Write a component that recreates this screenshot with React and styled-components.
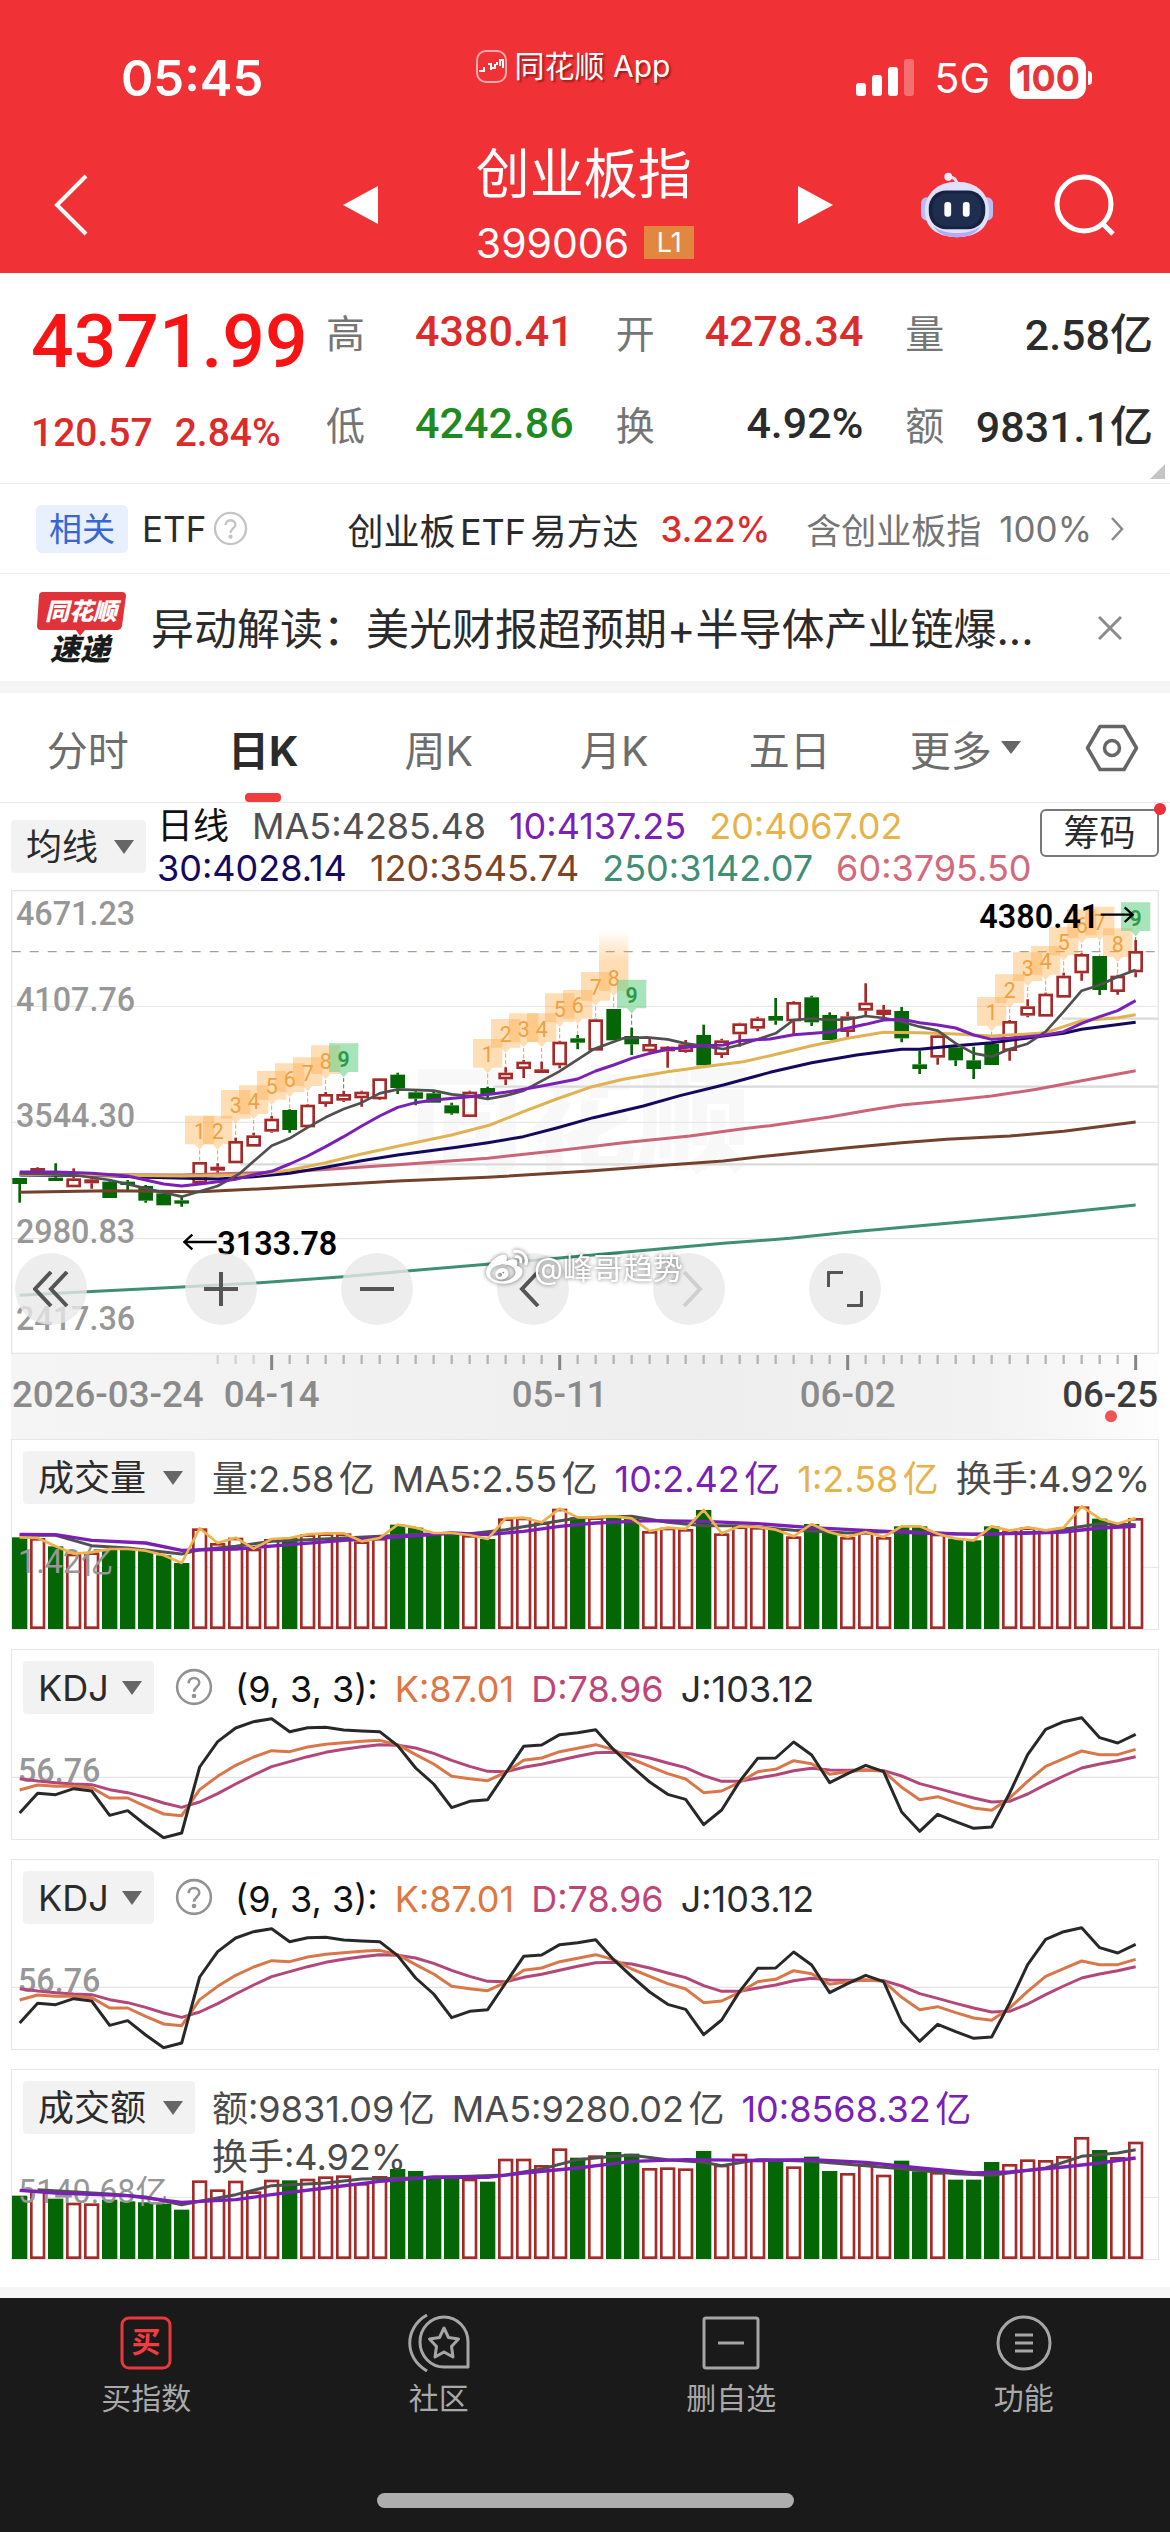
import React, { useState } from 'react'
import styled, { createGlobalStyle } from 'styled-components'
import { FaWeibo } from 'react-icons/fa'

const UI_FONT = 'Inter, "Noto Sans CJK SC", sans-serif'
const NUM_FONT = 'Roboto, "Noto Sans CJK SC", sans-serif'

const RED = '#a52a2a'
const GREEN = '#056605'
const STEP = 54

// one entry per trading day: g = down day, r = up day
const days = 'grgrrgggggrrrrrgrrrrrggggrgrrrrgrggrrrgrrrgrggrrrggrgggrrrrrgrr'.split('')

// [open/close top, open/close bottom, high, low]
const candles = [
  [894, 912, 894, 968], [864, 876, 862, 878], [893, 899, 850, 900], [895, 922, 865, 922],
  [898, 910, 890, 926], [905, 954, 900, 954], [905, 914, 900, 935], [918, 962, 915, 968],
  [940, 976, 938, 976], [961, 968, 947, 980], [846, 910, 846, 912], [860, 872, 850, 878],
  [783, 850, 773, 850], [766, 800, 758, 800], [716, 755, 708, 758], [690, 750, 688, 758],
  [674, 742, 672, 742], [642, 672, 636, 680], [642, 662, 633, 666], [635, 655, 632, 680],
  [595, 658, 594, 660], [584, 624, 578, 642], [637, 656, 634, 676], [640, 668, 636, 668],
  [676, 700, 668, 704], [635, 711, 632, 711], [624, 642, 620, 660], [578, 598, 562, 615],
  [545, 567, 540, 594], [568, 579, 545, 579], [485, 556, 482, 565], [475, 488, 465, 508],
  [418, 512, 416, 512], [387, 481, 387, 481], [468, 493, 443, 525], [492, 514, 475, 516],
  [500, 514, 498, 563], [493, 516, 480, 518], [465, 556, 434, 556], [481, 525, 476, 534],
  [430, 463, 428, 500], [415, 446, 410, 454], [408, 422, 354, 434], [366, 424, 364, 465],
  [352, 427, 347, 438], [405, 480, 397, 480], [409, 456, 395, 472], [368, 392, 310, 405],
  [389, 405, 375, 412], [393, 475, 381, 487], [553, 567, 512, 582], [466, 533, 464, 554],
  [502, 541, 498, 558], [541, 567, 500, 597], [492, 555, 490, 555], [423, 513, 420, 542],
  [379, 407, 358, 412], [341, 410, 338, 410], [287, 353, 278, 353], [222, 280, 220, 302],
  [228, 330, 228, 345], [287, 336, 284, 344], [213, 277, 180, 292],
]

// nine-day sequences: first day and the top of each tag
const sequences = [
  { start: 10, tops: [707, 707, 630, 616, 573, 550, 532, 496, 490] },
  { start: 26, tops: [477, 417, 400, 400, 340, 330, 276, 247, 299] },
  { start: 54, tops: [351, 283, 217, 198, 140, 88, 80, 145, 67] },
]

const averages = [
  { color: '#3f8f74', width: 9, points: '59,1246 260,1235 560,1220 780,1208 1030,1190 1230,1172 1470,1152 1670,1135 1970,1108 2170,1090 2370,1075 2543,1057 2810,1033 3110,1006 3407,975' },
  { color: '#74412c', width: 9, points: '59,937 329,932 599,935 815,925 1193,903 1463,892 1770,873 2003,855 2170,843 2310,827 2543,803 2705,788 2840,778 3029,768 3191,754 3407,726' },
  { color: '#cc6478', width: 9, points: '59,883 545,885 869,875 1193,854 1463,835 1670,812 1870,788 2070,768 2230,746 2310,737 2489,711 2610,690 2705,675 2840,662 2975,648 3110,628 3245,602 3407,572' },
  { color: '#14085f', width: 9, points: '59,885 329,887 437,892 653,897 761,890 869,880 977,862 1085,842 1193,825 1370,802 1463,788 1570,770 1670,744 1780,713 1930,678 2040,647 2170,615 2270,588 2310,577 2435,548 2570,525 2705,508 2759,508 2867,497 2975,488 3083,474 3191,460 3245,448 3407,427' },
  { color: '#e0b252', width: 9, points: '59,883 329,886 545,888 761,884 869,870 977,848 1085,822 1193,799 1355,765 1470,735 1570,695 1670,657 1770,622 1870,598 2003,575 2100,562 2230,545 2310,527 2435,497 2543,475 2651,457 2759,458 2867,462 2975,468 3083,462 3137,458 3191,440 3245,422 3353,413 3407,404' },
  { color: '#505050', width: 8, points: '59,880 221,885 329,900 437,925 545,950 653,918 720,880 815,797 869,775 923,742 977,712 1031,687 1085,668 1139,640 1193,628 1301,632 1355,643 1409,648 1463,657 1517,647 1571,632 1677,575 1780,508 1870,475 1940,472 2003,478 2055,490 2170,507 2230,492 2327,460 2381,420 2435,416 2489,420 2543,418 2597,408 2651,414 2705,425 2759,440 2813,452 2867,490 2921,520 2975,530 3029,507 3083,491 3137,455 3191,395 3245,332 3299,315 3353,290 3407,270' },
  { color: '#7a20b6', width: 9, points: '59,876 167,876 275,880 383,888 437,900 491,912 545,918 599,912 653,905 707,898 761,884 815,874 869,852 923,828 977,800 1031,770 1085,738 1139,708 1193,682 1247,668 1301,660 1409,650 1517,637 1625,618 1733,597 1787,573 1841,555 1895,535 1949,520 2003,508 2110,497 2170,495 2220,482 2310,477 2381,464 2489,456 2597,433 2651,420 2705,418 2759,428 2813,435 2867,444 2921,465 2975,478 3029,475 3137,465 3191,455 3245,430 3299,410 3353,392 3407,362' },
]

const volume = {
  tops: [295, 297, 322, 344, 340, 330, 330, 335, 349, 372, 268, 312, 296, 329, 300, 297, 286, 283, 283, 307, 297, 257, 266, 282, 282, 288, 300, 238, 236, 250, 209, 235, 235, 232, 238, 276, 266, 270, 213, 283, 262, 264, 272, 292, 255, 280, 294, 279, 294, 262, 262, 284, 299, 304, 262, 275, 265, 274, 266, 202, 239, 254, 237],
  ma5: [[0, 289], [2, 289], [4, 320], [6, 327], [9, 345], [10, 332], [12, 322], [14, 307], [16, 302], [20, 292], [23, 284], [25, 284], [27, 272], [29, 254], [31, 237], [34, 232], [36, 250], [38, 260], [40, 260], [43, 274], [46, 282], [49, 277], [52, 284], [54, 285], [57, 279], [60, 254], [62, 257]],
  ma10: [[0, 286], [2, 287], [4, 304], [7, 312], [9, 334], [12, 330], [15, 317], [18, 304], [21, 294], [24, 282], [26, 287], [28, 277], [30, 262], [32, 252], [35, 245], [38, 247], [41, 254], [44, 266], [47, 274], [50, 282], [53, 286], [55, 284], [58, 279], [60, 267], [62, 262]],
}

const amount = {
  tops: [380, 362, 389, 401, 403, 392, 397, 400, 404, 422, 334, 361, 335, 367, 332, 334, 329, 322, 319, 342, 321, 300, 306, 324, 324, 329, 338, 269, 269, 288, 238, 266, 259, 249, 254, 297, 295, 298, 246, 287, 254, 272, 272, 292, 263, 306, 312, 284, 317, 275, 307, 309, 332, 332, 279, 285, 271, 273, 261, 204, 243, 264, 218],
  ma5: [[1, 362], [5, 375], [7, 384], [9, 407], [10, 397], [12, 377], [14, 350], [17, 342], [19, 330], [22, 327], [25, 322], [27, 318], [29, 300], [31, 272], [33, 262], [34, 259], [36, 272], [38, 280], [39, 290], [41, 272], [44, 277], [47, 290], [49, 299], [52, 314], [54, 319], [57, 297], [59, 262], [61, 252], [62, 242]],
  ma10: [[0, 364], [2, 372], [6, 380], [9, 400], [12, 392], [14, 377], [17, 357], [20, 337], [23, 324], [26, 325], [28, 312], [31, 297], [34, 277], [37, 272], [41, 274], [44, 272], [47, 280], [50, 297], [53, 312], [55, 309], [58, 294], [60, 282], [62, 267]],
}

const kdj = {
  k: [423, 408, 412, 412, 416, 447, 447, 472, 495, 500, 422, 382, 349, 324, 305, 308, 294, 286, 281, 277, 274, 287, 317, 345, 382, 389, 395, 370, 334, 327, 308, 298, 287, 302, 330, 352, 374, 390, 431, 426, 400, 368, 361, 335, 344, 376, 368, 363, 367, 415, 452, 443, 461, 477, 484, 447, 397, 352, 329, 306, 317, 317, 301],
  d: [389, 396, 401, 405, 407, 422, 431, 445, 462, 475, 459, 434, 405, 378, 353, 338, 323, 310, 301, 293, 287, 289, 297, 313, 334, 352, 367, 368, 355, 346, 334, 322, 311, 310, 315, 327, 342, 356, 380, 397, 397, 387, 378, 365, 358, 363, 364, 363, 365, 381, 404, 418, 433, 447, 459, 457, 435, 407, 381, 357, 345, 335, 323],
  j: [492, 433, 437, 419, 426, 499, 485, 528, 566, 552, 354, 278, 237, 218, 209, 248, 236, 235, 243, 246, 248, 290, 357, 405, 476, 457, 452, 372, 292, 288, 257, 251, 242, 302, 352, 399, 436, 451, 527, 483, 397, 328, 327, 279, 318, 401, 374, 349, 368, 489, 547, 496, 518, 538, 534, 432, 317, 241, 218, 206, 266, 282, 256],
}

const stats = [
  ['高', '4380.41', '#dc2b2b'],
  ['开', '4278.34', '#dc2b2b'],
  ['量', '2.58亿', '#2b2b2b'],
  ['低', '4242.86', '#1f8a1f'],
  ['换', '4.92%', '#2b2b2b'],
  ['额', '9831.1亿', '#2b2b2b'],
]

const tabs = ['分时', '日K', '周K', '月K', '五日']

const panelX = (i) => 23 + STEP * i
const toPoints = (list) => list.map(([i, y]) => `${panelX(i)},${y}`).join(' ')
const daily = (list) => toPoints(list.map((y, i) => [i, y]))

function Picker({ label, value, options, width }) {
  return (
    <PickerBox $width={width}>
      <select aria-label={label} defaultValue={value}>
        {options.map((o) => <option key={o}>{o}</option>)}
      </select>
    </PickerBox>
  )
}

function Robot() {
  return (
    <svg width="74" height="68" viewBox="0 0 76 68" aria-hidden="true">
      <path d="M38 14c0-6-3-9-9-9" stroke="#dcdcf8" strokeWidth="3" fill="none" />
      <circle cx="29" cy="5" r="4" fill="#f4ecff" />
      <rect x="1" y="26" width="12" height="24" rx="6" fill="#b9bcf5" />
      <rect x="63" y="26" width="12" height="24" rx="6" fill="#b9bcf5" />
      <path d="M38 10c20 0 33 12 33 30S58 67 38 67 5 58 5 40s13-30 33-30z" fill="#dfe0fb" />
      <path d="M14 56c12 9 36 9 48 0-5 8-14 11-24 11s-19-3-24-11z" fill="#b7a8f2" />
      <rect x="9" y="19" width="58" height="40" rx="18" fill="#16223f" />
      <rect x="13" y="22" width="50" height="34" rx="15" fill="#1f2d4f" />
      <rect x="25" y="31" width="7" height="15" rx="3" fill="#fff" />
      <rect x="44" y="31" width="7" height="15" rx="3" fill="#fff" />
    </svg>
  )
}

function HelpIcon({ size, color }) {
  return (
    <svg width={size} height={size} viewBox="0 0 36 36" fill="none" stroke={color} strokeWidth="2.4" aria-hidden="true">
      <circle cx="18" cy="18" r="16" />
      <path d="M13 14.500c0-3 2-5 5-5s5 2 5 4.500c0 4-5 4-5 8.500" />
      <circle cx="18" cy="26.500" r="1" fill={color} />
    </svg>
  )
}

function KLine() {
  return (
    <ChartSvg viewBox="33 30 3444 1647" role="img" aria-label="日K线图">
      <defs>
        <linearGradient id="axis" x1="0" x2="1" y1="0" y2="0">
          <stop offset="0" stopColor="#f5f5f5" />
          <stop offset="0.6" stopColor="#eeeeee" />
          <stop offset="0.85" stopColor="#f2f2f2" />
          <stop offset="1" stopColor="#fdfdfd" />
        </linearGradient>
        <linearGradient id="glow" x1="0" x2="0" y1="0" y2="1">
          <stop offset="0" stopColor="#ffa940" stopOpacity="0" />
          <stop offset="1" stopColor="#ffa940" stopOpacity="0.4" />
        </linearGradient>
      </defs>
      <rect x="33" y="1420" width="3444" height="257" fill="url(#axis)" />
      <rect x="35" y="32" width="3440" height="1388" fill="#fff" stroke="#e6e6e6" strokeWidth="4" />
      <Mark x="1230" y="845">同花顺</Mark>
      <g stroke="#e4e4e4" strokeWidth="3">
        <path d="M35 379H3475M35 727H3475M35 1076H3475" />
      </g>
      <g stroke="#dadada" strokeWidth="7">
        <path d="M1480 620H3475M720 853H3475M3185 416H3475" />
      </g>
      <path d="M35 215H3475" stroke="#a8a08e" strokeWidth="4" strokeDasharray="27 27" />

      <g fill="#979797">
        <AxisText x="48" y="135">4671.23</AxisText>
        <AxisText x="48" y="393">4107.76</AxisText>
        <AxisText x="48" y="741">3544.30</AxisText>
        <AxisText x="48" y="1090">2980.83</AxisText>
        <AxisText x="48" y="1349">2417.36</AxisText>
      </g>

      <rect x="1797" y="150" width="88" height="97" fill="url(#glow)" />
      {sequences.map(({ start, tops }) => tops.map((top, n) => {
        const x = 59 + STEP * (start + n)
        const last = n === 8
        const color = last ? '#2e9a45' : '#f0a03c'
        return (
          <g key={x}>
            <path
              d={`M${x - 44} ${top}h88v86h-30l-14 16-14-16h-30z`}
              fill={last ? '#6fd08a' : '#ffa940'}
              fillOpacity={last ? 0.6 : 0.38}
            />
            <path d={`M${x} ${top + 104}V${candles[start + n][2]}`} stroke={color} strokeWidth="3" strokeDasharray="12 7" />
            <TagText x={x} y={top + 70} fill={color} $strong={last}>{n + 1}</TagText>
          </g>
        )
      }))}

      {candles.map(([top, bottom, high, low], i) => {
        const x = 59 + STEP * i
        const up = days[i] === 'r'
        return (
          <g key={i} stroke={up ? RED : GREEN} strokeWidth="8">
            <path d={`M${x} ${high}V${top}M${x} ${bottom}V${low}`} />
            <rect x={x - 18} y={top + 4} width="36" height={Math.max(bottom - top - 8, 2)} fill={up ? '#fff' : GREEN} />
          </g>
        )
      })}

      {averages.map((line) => (
        <polyline key={line.color} points={line.points} fill="none" stroke={line.color} strokeWidth={line.width} strokeLinejoin="round" />
      ))}

      <g fill="#000">
        <AxisText x="652" y="1124" $strong>3133.78</AxisText>
        <AxisText x="2938" y="143" $strong>4380.41</AxisText>
      </g>
      <path d="M650 1086H553M577 1064l-24 22 24 22M3302 104H3398M3374 82l24 22-24 22" fill="none" stroke="#000" strokeWidth="7" />

      {candles.map((c, i) => {
        if (i < 11) return null
        const major = [14, 30, 46, 62].includes(i)
        return (
          <path
            key={i}
            d={`M${59 + STEP * i} 1425v${major ? 45 : 27}`}
            stroke={major ? '#868686' : '#b4b4b4'}
            strokeWidth={major ? 9 : 7}
            strokeOpacity={i < 14 ? 0.5 : 1}
          />
        )
      })}
      <g fill="#8a8a8a">
        <AxisText x="36" y="1582" $date>2026-03-24</AxisText>
        <AxisText x="815" y="1582" $date textAnchor="middle">04-14</AxisText>
        <AxisText x="1679" y="1582" $date textAnchor="middle">05-11</AxisText>
        <AxisText x="2543" y="1582" $date textAnchor="middle">06-02</AxisText>
        <AxisText x="3474" y="1582" $date textAnchor="end" fill="#3c3c3c">06-25</AxisText>
      </g>
      <circle cx="3333" cy="1609" r="18" fill="#ee5358" />
    </ChartSvg>
  )
}

function Bars({ data, label, spot }) {
  return (
    <ChartSvg viewBox="0 192 3438 378" role="img" aria-label={label}>
      <path d="M0 385H3438" stroke="#e4e4e4" strokeWidth="3" />
      {data.tops.map((top, i) => (
        <rect
          key={i}
          x={panelX(i) - 19}
          y={top + 4}
          width="38"
          height={562 - top}
          fill={days[i] === 'r' ? '#fff' : GREEN}
          stroke={days[i] === 'r' ? RED : GREEN}
          strokeWidth="8"
        />
      ))}
      <g fill="#979797">
        <AxisText x="18" y="402" $light>{label}</AxisText>
      </g>
      <g fill="none" strokeLinejoin="round">
        <polyline points={toPoints(data.ma5)} stroke="#505050" strokeWidth="9" />
        <polyline points={toPoints(data.ma10)} stroke="#7a20b6" strokeWidth="10" />
        {spot && <polyline points={daily(data.tops)} stroke="#edb24a" strokeWidth="8" />}
      </g>
    </ChartSvg>
  )
}

function KdjPanel() {
  return (
    <Panel>
      <PanelHead>
        <Picker label="指标" value="KDJ" options={['KDJ']} width={131} />
        <HelpButton aria-label="KDJ说明"><HelpIcon size={38} color="#929292" /></HelpButton>
        <Legend>
          <LegendRow>
            <Item $color="#111">(9, 3, 3):</Item>
            <Item $color="#e0753f">K:87.01</Item>
            <Item $color="#bf4577">D:78.96</Item>
            <Item $color="#2b2b2b">J:103.12</Item>
          </LegendRow>
        </Legend>
      </PanelHead>
      <ChartSvg viewBox="0 192 3438 378" role="img" aria-label="KDJ">
        <path d="M0 385H3438" stroke="#e4e4e4" strokeWidth="4" />
        <g fill="#979797">
          <AxisText x="18" y="400">56.76</AxisText>
        </g>
        <g fill="none" strokeWidth="9" strokeLinejoin="round">
          <polyline points={daily(kdj.d)} stroke="#b4477a" />
          <polyline points={daily(kdj.k)} stroke="#d9774a" />
          <polyline points={daily(kdj.j)} stroke="#282828" />
        </g>
      </ChartSvg>
    </Panel>
  )
}

export default function App() {
  const [tab, setTab] = useState('日K')

  return (
    <Page>
      <GlobalStyle />
      <Header>
        <StatusBar>
          <Clock>05:45</Clock>
          <AppName>
            <svg width="31" height="33" viewBox="0 0 31 33" fill="none" stroke="#fff" aria-hidden="true">
              <rect x="1" y="1" width="29" height="31" rx="9" strokeWidth="2" strokeOpacity="0.6" />
              <path d="M3 21h5v-4M12 14h3v6M16 18h3v-4M21 15v-3M24 16v-6h3v8" strokeWidth="2" />
            </svg>
            同花顺 App
          </AppName>
          <StatusIcons>
            <svg width="58" height="38" viewBox="0 0 58 38" fill="#fff" aria-hidden="true">
              <rect x="0" y="24" width="10" height="13" rx="3" />
              <rect x="16" y="16" width="10" height="21" rx="3" />
              <rect x="32" y="8" width="10" height="29" rx="3" />
              <rect x="48" y="0" width="10" height="37" rx="3" fillOpacity="0.3" />
            </svg>
            <span>5G</span>
            <Battery>100</Battery>
          </StatusIcons>
        </StatusBar>
        <TitleBar>
          <LeftTools>
            <IconButton aria-label="返回">
              <svg width="34" height="62" viewBox="0 0 34 62"><path d="M32 2L3 31l29 29" fill="none" stroke="#fff" strokeWidth="4" /></svg>
            </IconButton>
            <IconButton aria-label="上一个">
              <svg width="35" height="38" viewBox="0 0 35 38"><path d="M35 0v38L0 19z" fill="#fff" /></svg>
            </IconButton>
          </LeftTools>
          <TitleBlock>
            <h1>创业板指</h1>
            <Code>399006 <b>L1</b></Code>
          </TitleBlock>
          <RightTools>
            <IconButton aria-label="下一个">
              <svg width="35" height="38" viewBox="0 0 35 38"><path d="M0 0v38l35-19z" fill="#fff" /></svg>
            </IconButton>
            <ToolPair>
              <IconButton aria-label="智能助手"><Robot /></IconButton>
              <IconButton aria-label="搜索">
                <svg width="62" height="62" viewBox="0 0 62 62" fill="none" stroke="#fff" strokeWidth="5">
                  <circle cx="30" cy="30" r="27" />
                  <path d="M48 49l11 11" />
                </svg>
              </IconButton>
            </ToolPair>
          </RightTools>
        </TitleBar>
      </Header>

      <Quote>
        <PriceColumn>
          <Price>4371.99</Price>
          <Change><span>120.57</span><span>2.84%</span></Change>
        </PriceColumn>
        <Stats>
          {stats.map(([name, value, color]) => (
            <Stat key={name}>
              <dt>{name}</dt>
              <StatValue $color={color}>{value}</StatValue>
            </Stat>
          ))}
        </Stats>
        <Corner />
      </Quote>

      <Related>
        <Tag>相关</Tag>
        <span>ETF</span>
        <HelpButton $tight aria-label="ETF说明"><HelpIcon size={35} color="#c4c4c4" /></HelpButton>
        <FundLink href="#fund">
          <span>创业板ETF易方达</span>
          <strong>3.22%</strong>
          <Muted>含创业板指</Muted>
          <Muted>100%</Muted>
          <svg width="14" height="26" viewBox="0 0 14 26"><path d="M2 2l10 11L2 24" fill="none" stroke="#8a8a8a" strokeWidth="2.500" /></svg>
        </FundLink>
      </Related>

      <News>
        <svg width="92" height="82" viewBox="0 0 92 82" role="img" aria-label="同花顺速递">
          <path d="M6 5h79q4 0 4 4l-4 30q-1 4-5 4H48l-5 6-4-6H4q-4 0-4-4L2 9q0-4 4-4z" fill="#e03339" />
          <LogoText x="44" y="33" textAnchor="middle" fill="#fff">同花顺</LogoText>
          <LogoText x="43" y="73" textAnchor="middle" fill="#1b1b1b" $large>速递</LogoText>
        </svg>
        <a href="#news">异动解读：美光财报超预期+半导体产业链爆...</a>
        <IconButton aria-label="关闭">
          <svg width="24" height="24" viewBox="0 0 24 24"><path d="M1 1l22 22M23 1L1 23" stroke="#8c8c8c" strokeWidth="3" /></svg>
        </IconButton>
      </News>
      <Band $height={12} />

      <Tabs role="tablist">
        {tabs.map((name) => (
          <Tab key={name} role="tab" aria-selected={tab === name} $active={tab === name} onClick={() => setTab(name)}>
            {name}
          </Tab>
        ))}
        <Tab>更多<Caret /></Tab>
        <IconButton aria-label="设置">
          <svg width="54" height="48" viewBox="0 0 54 48" fill="none" stroke="#666" strokeWidth="3.500" strokeLinejoin="round">
            <path d="M15 2.500h24L51.500 24 39 45.500H15L2.500 24z" />
            <circle cx="27" cy="24" r="7.500" />
          </svg>
        </IconButton>
      </Tabs>

      <Averages>
        <Picker label="主图指标" value="均线" options={['均线']} width={135} />
        <AverageRows>
          <AverageRow>
            <Item $color="#111">日线</Item>
            <Item $color="#505050">MA5:4285.48</Item>
            <Item $color="#7a20b6">10:4137.25</Item>
            <Item $color="#e8b24a">20:4067.02</Item>
          </AverageRow>
          <AverageRow>
            <Item $color="#14085f">30:4028.14</Item>
            <Item $color="#7d4526">120:3545.74</Item>
            <Item $color="#3f8f74">250:3142.07</Item>
            <Item $color="#d4687c">60:3795.50</Item>
          </AverageRow>
        </AverageRows>
        <ChipButton>筹码</ChipButton>
      </Averages>

      <Charts>
        <KLineBox>
          <KLine />
          <Toolbar>
            <RoundButton aria-label="快速后退" $wide>
              <svg viewBox="0 0 36 36"><path d="M18 1L2 18l16 17M34 1L18 18l16 17" /></svg>
            </RoundButton>
            <RoundButton aria-label="放大">
              <svg viewBox="0 0 36 36"><path d="M18 1v34M1 18h34" /></svg>
            </RoundButton>
            <RoundButton aria-label="缩小">
              <svg viewBox="0 0 36 36"><path d="M1 18h34" /></svg>
            </RoundButton>
            <RoundButton aria-label="左移">
              <svg viewBox="0 0 36 36"><path d="M23 1L7 18l16 17" /></svg>
            </RoundButton>
            <RoundButton aria-label="右移" disabled>
              <svg viewBox="0 0 36 36"><path d="M13 1l16 17-16 17" /></svg>
            </RoundButton>
            <RoundButton aria-label="全屏">
              <svg viewBox="0 0 36 36"><path d="M1 16V4q0-3 3-3h12M35 20v12q0 3-3 3H20" /></svg>
            </RoundButton>
          </Toolbar>
          <Author><FaWeibo size={42} />@峰哥趋势</Author>
        </KLineBox>

        <Panel>
          <PanelHead>
            <Picker label="副图指标" value="成交量" options={['成交量', '成交额']} width={172} />
            <Legend>
              <LegendRow>
                <Item $color="#4b4b4b">量:2.58亿</Item>
                <Item $color="#4b4b4b">MA5:2.55亿</Item>
                <Item $color="#7a20b6">10:2.42亿</Item>
                <Item $color="#e8b24a">1:2.58亿</Item>
                <Item $color="#4b4b4b">换手:4.92%</Item>
              </LegendRow>
            </Legend>
          </PanelHead>
          <Bars data={volume} label="1.42亿" spot />
        </Panel>

        <KdjPanel />
        <KdjPanel />

        <Panel>
          <PanelHead>
            <Picker label="副图指标" value="成交额" options={['成交量', '成交额']} width={172} />
            <Legend>
              <LegendRow>
                <Item $color="#4b4b4b">额:9831.09亿</Item>
                <Item $color="#4b4b4b">MA5:9280.02亿</Item>
                <Item $color="#7a20b6">10:8568.32亿</Item>
              </LegendRow>
              <LegendRow>
                <Item $color="#4b4b4b">换手:4.92%</Item>
              </LegendRow>
            </Legend>
          </PanelHead>
          <Bars data={amount} label="5140.68亿" />
        </Panel>
      </Charts>
      <Band $height={11} />

      <BottomNav>
        <NavItems>
          <NavItem href="#buy">
            <svg width="52" height="54" viewBox="0 0 52 54" fill="none" stroke="#e8393c" strokeWidth="3">
              <rect x="2" y="2" width="48" height="50" rx="7" />
              <BuyText x="26" y="37" textAnchor="middle">买</BuyText>
            </svg>
            买指数
          </NavItem>
          <NavItem href="#community">
            <svg width="62" height="58" viewBox="0 0 62 58" fill="none" stroke="#a6a6a6" strokeWidth="3" strokeLinejoin="round">
              <path d="M60 53H36A24 25 0 1 1 60 28z" />
              <path d="M19 1C-4 14-4 44 19 57" />
              <path d="M36 14l4.500 9.500 10 1.500-7 7.500 1.500 10.500-9-5-9 5 1.500-10.500-7-7.500 10-1.500z" />
            </svg>
            社区
          </NavItem>
          <NavItem href="#watchlist">
            <svg width="58" height="54" viewBox="0 0 58 54" fill="none" stroke="#a6a6a6" strokeWidth="3">
              <rect x="2" y="2" width="54" height="50" rx="2" />
              <path d="M16 27h26" />
            </svg>
            删自选
          </NavItem>
          <NavItem href="#tools">
            <svg width="56" height="56" viewBox="0 0 56 56" fill="none" stroke="#a6a6a6" strokeWidth="3">
              <circle cx="28" cy="28" r="26" />
              <path d="M19 20h18M19 28h18M19 36h18" />
            </svg>
            功能
          </NavItem>
        </NavItems>
        <HomeBar />
      </BottomNav>
    </Page>
  )
}

const GlobalStyle = createGlobalStyle`
*{
  box-sizing:border-box;
}
body{
  margin:0;
  background:#fff;
  font-family:${UI_FONT};
  color:#2b2b2b;
}
button,select{
  font-family:inherit;
  color:inherit;
  border:0;
  padding:0;
  margin:0;
  background:none;
}
a{
  color:inherit;
  text-decoration:none;
}
h1,dl,dd{
  margin:0;
}
svg{
  display:block;
  flex:none;
}
`
const Page = styled.div`
min-height:100vh;
display:flex;
flex-direction:column;
`
const Header = styled.header`
background:#f03236;
color:#fff;
`
const StatusBar = styled.div`
height:136px;
padding:20px 78px 0 54px;
display:grid;
grid-template-columns:1fr auto 1fr;
align-items:center;
`
const Clock = styled.div`
padding-left:67px;
font-size:49px;
font-weight:600;
`
const AppName = styled.div`
display:flex;
align-items:center;
gap:8px;
padding-bottom:24px;
font-size:30px;
line-height:34px;
text-shadow:2px 2px 2px rgba(90,0,0,0.5);
`
const StatusIcons = styled.div`
display:flex;
align-items:center;
justify-content:flex-end;
gap:20px;
font-size:41px;
`
const Battery = styled.div`
position:relative;
width:76px;
height:42px;
margin-right:6px;
border-radius:12px;
background:#fff;
color:#e8353a;
font-size:36px;
font-weight:700;
line-height:42px;
text-align:center;
&::after{
  content:'';
  position:absolute;
  right:-6px;
  top:14px;
  width:4px;
  height:14px;
  border-radius:0 4px 4px 0;
  background:#fff;
}
`
const TitleBar = styled.div`
height:137px;
padding:0 54px;
display:grid;
grid-template-columns:1fr auto 1fr;
align-items:center;
`
const LeftTools = styled.div`
display:flex;
align-items:center;
justify-content:space-between;
padding-right:98px;
`
const RightTools = styled.div`
display:flex;
align-items:center;
justify-content:space-between;
padding-left:104px;
`
const ToolPair = styled.div`
display:flex;
align-items:center;
gap:60px;
`
const IconButton = styled.button`
display:flex;
align-items:center;
justify-content:center;
cursor:pointer;
`
const TitleBlock = styled.div`
h1{
  font-size:54px;
  font-weight:400;
  line-height:76px;
}
`
const Code = styled.div`
display:flex;
align-items:center;
gap:15px;
font-size:41px;
line-height:60px;
b{
  width:50px;
  background:#e2873f;
  font-size:27px;
  font-weight:400;
  line-height:33px;
  text-align:center;
}
`
const Quote = styled.section`
position:relative;
display:flex;
padding:12px 17px 14px 31px;
border-bottom:1px solid #ececec;
font-family:${NUM_FONT};
font-weight:500;
`
const PriceColumn = styled.div`
width:295px;
flex:none;
`
const Price = styled.div`
font-size:75px;
line-height:112px;
color:#f81414;
`
const Change = styled.div`
display:flex;
gap:22px;
font-size:39px;
line-height:72px;
color:#dc2b2b;
`
const Stats = styled.dl`
flex:1;
display:grid;
grid-template-columns:repeat(3,1fr);
column-gap:42px;
`
const Stat = styled.div`
display:flex;
align-items:center;
justify-content:space-between;
height:92px;
font-size:43px;
dt{
  font-size:39px;
  font-weight:400;
  color:#757575;
}
`
const StatValue = styled.dd`
color:${(p) => p.$color};
`
const Corner = styled.i`
position:absolute;
right:5px;
bottom:4px;
border-left:15px solid transparent;
border-bottom:15px solid #c4c4c4;
`
const Related = styled.section`
display:flex;
align-items:center;
height:90px;
padding:0 46px 0 36px;
border-bottom:1px solid #ececec;
font-size:35px;
white-space:nowrap;
`
const Tag = styled.span`
margin-right:14px;
padding:0 13px;
border-radius:6px;
background:#e8effd;
color:#3766d2;
font-size:33px;
line-height:48px;
`
const HelpButton = styled.button`
display:flex;
margin:${(p) => (p.$tight ? '0 0 0 7px' : '7px 5px 0 0')};
`
const FundLink = styled.a`
display:flex;
align-items:center;
margin-left:auto;
font-size:36px;
text-autospace:normal;
strong{
  margin:0 36px 0 22px;
  color:#dc2b2b;
  font-size:35px;
  font-weight:500;
}
`
const Muted = styled.span`
margin-right:18px;
color:#757575;
font-size:35px;
`
const News = styled.section`
display:flex;
align-items:center;
height:107px;
padding:0 48px 0 37px;
a{
  flex:1;
  margin-left:22px;
  padding-bottom:4px;
  font-size:43px;
  white-space:nowrap;
}
`
const LogoText = styled.text`
font-family:"Noto Sans CJK SC", sans-serif;
font-size:${(p) => (p.$large ? 30 : 24)}px;
font-weight:900;
font-style:italic;
`
const Band = styled.div`
height:${(p) => p.$height}px;
background:#f5f5f5;
`
const Tabs = styled.nav`
display:grid;
grid-template-columns:repeat(6,3fr) 2fr;
height:110px;
border-bottom:1px solid #e8e8e8;
`
const Tab = styled.button`
position:relative;
display:flex;
align-items:center;
justify-content:center;
gap:9px;
font-size:41px;
font-weight:${(p) => (p.$active ? 700 : 400)};
color:${(p) => (p.$active ? '#2b2b2b' : '#6d6d6d')};
&::after{
  content:'';
  display:${(p) => (p.$active ? 'block' : 'none')};
  position:absolute;
  left:50%;
  bottom:0;
  width:36px;
  height:9px;
  margin-left:-18px;
  border-radius:4px;
  background:#ef3c3f;
}
`
const Caret = styled.i`
border:10px solid transparent;
border-top:13px solid #666;
border-bottom:0;
`
const Averages = styled.div`
display:flex;
align-items:center;
height:87px;
padding:0 11px;
`
const PickerBox = styled.label`
position:relative;
flex:none;
width:${(p) => p.$width}px;
height:53px;
border-radius:4px;
background:#f2f2f2;
select{
  appearance:none;
  width:100%;
  height:53px;
  padding-left:15px;
  font-size:36px;
  color:#2b2b2b;
}
&::after{
  content:'';
  position:absolute;
  right:12px;
  top:20px;
  border:10px solid transparent;
  border-top:14px solid #666;
  border-bottom:0;
  pointer-events:none;
}
`
const AverageRows = styled.div`
flex:1;
min-width:0;
margin-left:11px;
`
const AverageRow = styled.div`
display:flex;
gap:23px;
line-height:42px;
`
const Item = styled.span`
color:${(p) => p.$color};
font-size:36px;
white-space:nowrap;
text-autospace:normal;
`
const ChipButton = styled.button`
position:relative;
align-self:flex-start;
flex:none;
width:119px;
height:48px;
margin-top:6px;
border:2px solid #777;
border-radius:6px;
font-size:36px;
line-height:40px;
&::after{
  content:'';
  position:absolute;
  right:-9px;
  top:-8px;
  width:12px;
  height:12px;
  border-radius:50%;
  background:#ee2f3a;
}
`
const Charts = styled.main`
padding:0 11px 27px;
`
const ChartSvg = styled.svg`
width:100%;
height:auto;
`
const AxisText = styled.text`
font-family:${NUM_FONT};
font-size:${(p) => (p.$date ? 110 : 97)}px;
font-weight:${(p) => (p.$light ? 400 : 500)};
${(p) => p.$strong && 'font-weight:600;'}
`
const TagText = styled.text`
font-family:${NUM_FONT};
font-size:64px;
font-weight:${(p) => (p.$strong ? 600 : 400)};
text-anchor:middle;
`
const Mark = styled.text`
font-family:"Noto Sans CJK SC", sans-serif;
font-size:340px;
font-weight:900;
fill:#f8f8f8;
`
const KLineBox = styled.div`
position:relative;
`
const Toolbar = styled.div`
position:absolute;
left:4px;
top:363px;
display:flex;
gap:84px;
`
const RoundButton = styled.button`
display:flex;
align-items:center;
justify-content:center;
width:72px;
height:72px;
margin-right:${(p) => (p.$wide ? 14 : 0)}px;
border-radius:50%;
background:rgba(233,233,233,0.8);
svg{
  width:36px;
  height:36px;
  fill:none;
  stroke:#555;
  stroke-width:4px;
}
&:disabled svg{
  stroke:#cfcfcf;
}
`
const Author = styled.div`
position:absolute;
left:475px;
top:357px;
display:flex;
align-items:center;
gap:6px;
color:#fff;
font-size:30px;
line-height:42px;
filter:drop-shadow(0 0 2px rgba(0,0,0,0.55));
pointer-events:none;
`
const Panel = styled.section`
border:1px solid #e6e6e6;
& + &{
  margin-top:19px;
}
`
const PanelHead = styled.div`
position:relative;
display:flex;
align-items:flex-start;
height:63px;
padding:11px 0 0 11px;
> button{
  margin-left:21px;
}
`
const Legend = styled.div`
margin-left:17px;
padding-top:4px;
`
const LegendRow = styled.div`
display:flex;
gap:17px;
height:48px;
line-height:48px;
`
const BottomNav = styled.footer`
flex:1;
display:flex;
flex-direction:column;
align-items:center;
min-height:234px;
padding:16px 0 24px;
background:#1a1a1a;
color:#a9a9a9;
`
const NavItems = styled.nav`
width:100%;
display:grid;
grid-template-columns:repeat(4,1fr);
`
const NavItem = styled.a`
display:flex;
flex-direction:column;
align-items:center;
font-size:30px;
line-height:40px;
svg{
  height:58px;
  margin-bottom:6px;
}
`
const BuyText = styled.text`
font-family:"Noto Sans CJK SC", sans-serif;
font-size:29px;
font-weight:700;
fill:#f23c40;
stroke:none;
`
const HomeBar = styled.div`
width:417px;
max-width:60%;
height:15px;
margin-top:auto;
border-radius:8px;
background:#aeaeae;
`
